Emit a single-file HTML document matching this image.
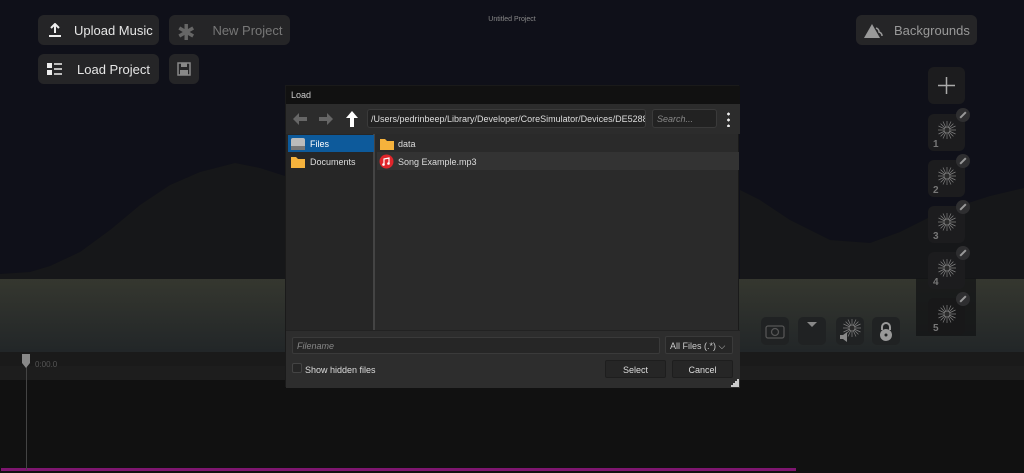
<!DOCTYPE html>
<html><head><meta charset="utf-8"><style>
*{margin:0;padding:0;box-sizing:border-box}
body{width:1024px;height:473px;overflow:hidden;background:#0f1019;font-family:"Liberation Sans",sans-serif;position:relative}
.abs{position:absolute}
.btn{position:absolute;background:#252527;border-radius:6px;color:#e6e6e6;font-size:13px;display:flex;align-items:center}
.dlg{font-size:9px;color:#ddd}
.tile{position:absolute;left:928px;width:37px;height:37px;background:#1c1c1e;border-radius:6px}
.tile .n{position:absolute;left:5px;bottom:1px;font-size:10px;color:#777;font-weight:bold}
.tile .p{position:absolute;right:-5px;top:-6px;width:14px;height:14px;border-radius:50%;background:#2e2e30}
.tile .p:after{content:"";position:absolute;left:6px;top:3px;width:2px;height:8px;background:#999;transform:rotate(45deg)}
.tb{position:absolute;top:317px;width:28px;height:28px;background:#202223;border-radius:5px}
</style></head><body>
<svg class="abs" style="left:0;top:0" width="1024" height="473">
<path d="M0 274 L30 272 L50 266 L80 252 L110 230 L140 205 L170 185 L200 172 L235 163 L260 168 L285 176 L285 290 L0 290Z" fill="#161719"/>
<path d="M740 190 L760 200 L790 220 L830 240 L870 243 L900 232 L940 212 L990 196 L1024 188 L1024 290 L740 290Z" fill="#161719"/>
<defs><linearGradient id="g" x1="0" y1="0" x2="0" y2="1"><stop offset="0" stop-color="#35372f"/><stop offset="1" stop-color="#222628"/></linearGradient></defs>
<rect x="0" y="279" width="1024" height="73" fill="url(#g)"/>
<rect x="916" y="278" width="60" height="58" fill="#141517" opacity="0.8"/>
<rect x="0" y="352" width="1024" height="14" fill="#1a1a1a"/>
<rect x="0" y="366" width="1024" height="14" fill="#1d1d1d"/>
<rect x="0" y="380" width="1024" height="93" fill="#111"/>
<rect x="1" y="468" width="795" height="3" fill="#7e1670"/>
<line x1="26.5" y1="360" x2="26.5" y2="470" stroke="#444" stroke-width="1"/>
<path d="M22 354 h8 v9 l-4 5 l-4 -5z" fill="#888"/>
<text x="35" y="367" font-size="8" fill="#555" font-family="Liberation Sans">0:00.0</text>
</svg>
<div class="abs" style="left:0;top:16px;width:1024px;text-align:center;font-size:7px;color:#888">Untitled Project</div>
<div class="btn" style="left:38px;top:15px;width:121px;height:30px"><svg style="margin:0 12px 0 10px" width="14" height="14"><path d="M7 1v9M3 5l4-4 4 4M1 13h12" stroke="#eee" stroke-width="2" fill="none"/></svg>Upload Music</div>
<div class="btn" style="left:169px;top:15px;width:121px;height:30px;color:#777"><span style="font-size:22px;margin:6px 17px 0 8px;color:#666">✱</span>New Project</div>
<div class="btn" style="left:38px;top:54px;width:121px;height:30px"><svg style="margin:0 14px 0 9px" width="16" height="12"><rect x="0" y="0" width="5" height="5" fill="#eee"/><rect x="0" y="7" width="5" height="5" fill="#eee"/><path d="M7 1h8M7 6h8M7 11h8" stroke="#eee" stroke-width="1.5"/></svg>Load Project</div>
<div class="btn" style="left:169px;top:54px;width:30px;height:30px;justify-content:center"><svg width="14" height="14"><rect x="1" y="1" width="12" height="12" fill="none" stroke="#888" stroke-width="1.5"/><rect x="4" y="1" width="6" height="4" fill="#888"/><rect x="3" y="8" width="8" height="5" fill="#888"/></svg></div>
<div class="btn" style="left:856px;top:15px;width:121px;height:30px;color:#999"><svg style="margin:0 10px 0 8px" width="20" height="16"><path d="M0 16L8 2l8 14z" fill="#999"/><path d="M12 6q3 1 3 4q3 1 3 4" stroke="#999" fill="none" stroke-width="1.5"/></svg>Backgrounds</div>
<div class="tile" style="top:67px"><svg width="37" height="37"><path d="M18.5 10v17M10 18.5h17" stroke="#aaa" stroke-width="1.5"/></svg></div>
<svg width="0" height="0"><defs><g id="st" stroke="#808080" stroke-width="0.7"><path d="M9 0v18M0 9h18M2.6 2.6l12.8 12.8M15.4 2.6L2.6 15.4M5 0.5l8 17M13 0.5l-8 17M0.5 5l17 8M17.5 5l-17 8"/><circle cx="9" cy="9" r="3" fill="#2a2a2a"/></g></defs></svg>
<div class="tile" style="top:114px"><svg class="abs" style="left:10px;top:7px" width="18" height="18"><use href="#st"/></svg><span class="n">1</span><span class="p"></span></div>
<div class="tile" style="top:160px"><svg class="abs" style="left:10px;top:7px" width="18" height="18"><use href="#st"/></svg><span class="n">2</span><span class="p"></span></div>
<div class="tile" style="top:206px"><svg class="abs" style="left:10px;top:7px" width="18" height="18"><use href="#st"/></svg><span class="n">3</span><span class="p"></span></div>
<div class="tile" style="top:252px"><svg class="abs" style="left:10px;top:7px" width="18" height="18"><use href="#st"/></svg><span class="n">4</span><span class="p"></span></div>
<div class="tile" style="top:298px;background:#181819"><svg class="abs" style="left:10px;top:7px" width="18" height="18"><use href="#st"/></svg><span class="n">5</span><span class="p"></span></div>
<div class="tb" style="left:761px"><svg width="28" height="28"><rect x="5" y="9" width="18" height="12" rx="2" fill="none" stroke="#555" stroke-width="1.3"/><circle cx="14" cy="15" r="3.5" fill="none" stroke="#555" stroke-width="1.3"/></svg></div>
<div class="tb" style="left:798px"><svg width="28" height="28"><path d="M9 5h10l-5 5z" fill="#888"/></svg></div>
<div class="tb" style="left:836px"><svg class="abs" style="left:7px;top:2px" width="18" height="18"><use href="#st"/></svg><svg class="abs" style="left:3px;top:15px" width="10" height="10"><path d="M1 3h3l4-3v10l-4-3h-3z" fill="#888"/></svg></div>
<div class="tb" style="left:872px"><svg width="28" height="28"><path d="M10 13v-3a4 4 0 0 1 8 0v3" stroke="#999" stroke-width="2" fill="none"/><circle cx="14" cy="18" r="6" fill="#999"/><circle cx="14" cy="18" r="1.5" fill="#202223"/></svg></div>
<div class="abs dlg" style="left:285px;top:85px;width:454px;height:302px;background:#2a2a2a;border:1px solid #1a1a1a">
 <div class="abs" style="left:0;top:0;width:454px;height:18px;background:#111;color:#ccc;padding:4px 5px">Load</div>
 <div class="abs" style="left:0;top:18px;width:454px;height:30px;background:#2c2c2c">
  <svg class="abs" style="left:6px;top:8px" width="50" height="14"><path d="M1 7l6-6v4h8v4h-8v4z" fill="#666"/><path d="M41 7l-6-6v4h-8v4h8v4z" fill="#666"/></svg>
  <svg class="abs" style="left:59px;top:6px" width="14" height="18"><path d="M7 1l6 7h-4v9h-4v-9h-4z" fill="#fff"/></svg>
  <div class="abs" style="left:81px;top:5px;width:279px;height:19px;background:#222;border:1px solid #3a3a3a;border-radius:3px;padding:4px 3px;color:#ddd;font-size:9px;white-space:nowrap;overflow:hidden">/Users/pedrinbeep/Library/Developer/CoreSimulator/Devices/DE5288</div>
  <div class="abs" style="left:366px;top:5px;width:65px;height:19px;background:#222;border:1px solid #3a3a3a;border-radius:3px;padding:4px 4px;color:#888;font-style:italic">Search...</div>
  <div class="abs" style="left:441px;top:7px;width:3px;height:16px;background:radial-gradient(circle,#eee 1.3px,transparent 1.5px) 0 0/3px 6px"></div>
 </div>
 <div class="abs" style="left:0;top:48px;width:89px;height:196px;background:#262626;border-right:2px solid #444"></div>
 <div class="abs" style="left:2px;top:49px;width:86px;height:17px;background:#0d5a9b"></div>
 <svg class="abs" style="left:4px;top:51px" width="16" height="14"><rect x="1" y="1" width="14" height="12" rx="2" fill="#bbb"/><rect x="1" y="9" width="14" height="4" fill="#777"/></svg>
 <div class="abs" style="left:24px;top:53px;color:#fff">Files</div>
 <svg class="abs" style="left:4px;top:69px" width="16" height="14"><path d="M1 2h5l2 2h7v9h-14z" fill="#f5b23c"/></svg>
 <div class="abs" style="left:24px;top:71px">Documents</div>
 <div class="abs" style="left:91px;top:66px;width:362px;height:18px;background:#333"></div>
 <svg class="abs" style="left:93px;top:51px" width="16" height="14"><path d="M1 2h5l2 2h7v9h-14z" fill="#f5b23c"/></svg>
 <div class="abs" style="left:112px;top:53px">data</div>
 <svg class="abs" style="left:93px;top:68px" width="15" height="15"><circle cx="7.5" cy="7.5" r="7" fill="#e0252b"/><path d="M5 10.5V5l5-1v5.5" stroke="#fff" stroke-width="1.2" fill="none"/><circle cx="4.5" cy="10.5" r="1.3" fill="#fff"/><circle cx="9.5" cy="9.5" r="1.3" fill="#fff"/></svg>
 <div class="abs" style="left:112px;top:71px">Song Example.mp3</div>
 <div class="abs" style="left:0;top:244px;width:454px;height:58px;background:#2d2d2d;border-top:1px solid #222"></div>
 <div class="abs" style="left:6px;top:251px;width:368px;height:17px;background:#262626;border:1px solid #3a3a3a;border-radius:2px;padding:3px 4px;color:#888;font-style:italic">Filename</div>
 <div class="abs" style="left:379px;top:250px;width:68px;height:18px;background:#262626;border:1px solid #3a3a3a;border-radius:2px;padding:4px 4px;color:#ccc">All Files (.*) ⌵</div>
 <div class="abs" style="left:6px;top:277px;width:10px;height:10px;border:1px solid #444;border-radius:2px;background:#262626"></div>
 <div class="abs" style="left:19px;top:279px">Show hidden files</div>
 <div class="abs" style="left:319px;top:274px;width:61px;height:18px;background:#262626;border:1px solid #1e1e1e;border-radius:2px;text-align:center;padding-top:4px">Select</div>
 <div class="abs" style="left:386px;top:274px;width:61px;height:18px;background:#262626;border:1px solid #1e1e1e;border-radius:2px;text-align:center;padding-top:4px">Cancel</div>
 <svg class="abs" style="left:445px;top:293px" width="8" height="8"><path d="M6 0h2v8h-8v-2h2v-2h2v-2h2z" fill="#ccc"/></svg>
</div>
</body></html>
